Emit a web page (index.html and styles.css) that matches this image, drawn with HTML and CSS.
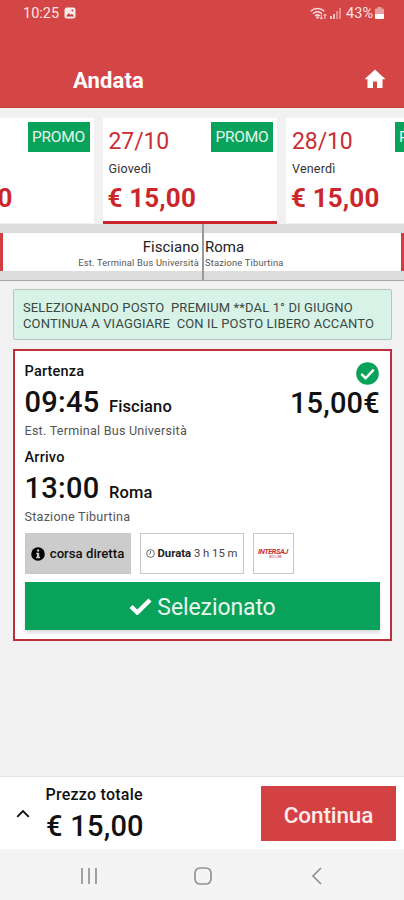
FILE: index.html
```html
<!DOCTYPE html>
<html lang="it">
<head>
<meta charset="utf-8">
<meta name="viewport" content="width=device-width, initial-scale=1">
<title>Andata</title>
<link rel="stylesheet" href="styles.css">
</head>
<body>
<div class="app">
  <header class="header">
    <div class="status">
      <span class="clock">10:25</span>
      <svg class="photo" viewBox="0 0 12 12"><rect x="0.5" y="0.5" width="11" height="11" rx="2.2" fill="#fbeaea"/><path d="M2 9.5 4.8 6l1.8 2L8 6.8l2.2 2.7z" fill="#c23c40"/><circle cx="8.4" cy="3.6" r="1" fill="#c23c40"/></svg>
      <span class="spacer"></span>
      <svg class="wifi" viewBox="0 0 17 13"><g fill="none" stroke="#f8dcdc" stroke-width="1.6"><path d="M.8 4.2C4.300.6 10.700.6 14.200 4.200"/><path d="M3 6.700c2.600-2.600 6.400-2.600 9 0"/><path d="M5.200 9c1.400-1.300 3.200-1.300 4.600 0"/></g><circle cx="7.500" cy="10.500" r="1.200" fill="#f8dcdc"/><path d="M11.300 7.500v4.500M9.800 10.500l1.500 1.700 1.500-1.700M15 12V7M13.600 8.600 15 7l1.400 1.600" fill="none" stroke="#f8dcdc"/></svg>
      <svg class="signal" viewBox="0 0 11 12"><g fill="#f3c4c4"><path d="M0 9h2v3H0zM3 7h2v5H3z"/><path d="M6 4h2v8H6zM9 1h2v11H9z" opacity=".55"/></g></svg>
      <span class="percent">43%</span>
      <svg class="battery" viewBox="0 0 9 12"><path d="M2.500 0h4v1.500H8Q9 1.500 9 2.500V6H0V2.500Q0 1.500 1 1.500h1.500z" fill="#e9a0a0"/><path d="M0 6.500h9V11q0 1-1 1H1q-1 0-1-1z" fill="#fff"/></svg>
    </div>
    <div class="titlebar">
      <h1>Andata</h1>
      <svg class="home" viewBox="0 0 22 20"><path d="M11 .5 21.500 10.200H18.500V19H13V12.500H9V19H3.500V10.200H.5z" fill="#fff"/></svg>
    </div>
  </header>

  <nav class="dates">
    <div class="day">
      <div class="top"><span class="date"></span><span class="promo">PROMO</span></div>
      <div class="weekday"></div>
      <div class="fare">€ 15,00</div>
    </div>
    <div class="day active">
      <div class="top"><span class="date">27/10</span><span class="promo">PROMO</span></div>
      <div class="weekday">Giovedì</div>
      <div class="fare">€ 15,00</div>
    </div>
    <div class="day">
      <div class="top"><span class="date">28/10</span><span class="promo">PROMO</span></div>
      <div class="weekday">Venerdì</div>
      <div class="fare">€ 15,00</div>
    </div>
  </nav>

  <section class="route">
    <div class="from"><div class="stop"><b>Fisciano</b><small>Est. Terminal Bus Università</small></div></div>
    <div class="to"><div class="stop"><b>Roma</b><small>Stazione Tiburtina</small></div></div>
  </section>

  <main class="content">
    <div class="notice"><div class="l1">SELEZIONANDO POSTO&nbsp; PREMIUM **DAL 1° DI GIUGNO</div><div class="l2">CONTINUA A VIAGGIARE&nbsp; CON IL POSTO LIBERO ACCANTO</div></div>

    <article class="trip">
      <div class="summary">
        <div class="legs">
          <div class="label">Partenza</div>
          <div class="when"><span class="time">09:45</span><span class="city">Fisciano</span></div>
          <div class="station">Est. Terminal Bus Università</div>
          <div class="label arr">Arrivo</div>
          <div class="when"><span class="time">13:00</span><span class="city">Roma</span></div>
          <div class="station">Stazione Tiburtina</div>
        </div>
        <div class="cost">
          <svg class="tick" viewBox="0 0 24 24"><circle cx="12" cy="12" r="11.800" fill="#08a25a"/><path d="M5.500 12.500 10 17l8.500-9" fill="none" stroke="#fff" stroke-width="2.600"/></svg>
          <div class="amount">15,00€</div>
        </div>
      </div>
      <div class="tags">
        <div class="tag direct"><svg viewBox="0 0 14 14"><circle cx="7" cy="7" r="6.800"/><path d="M6 2.600h2.200v2H6zM5.200 5.800h3v4h.9v1.400H5.100V9.800H6V7.200h-.8z" fill="#ccc"/></svg><span>corsa diretta</span></div>
        <div class="tag duration"><svg viewBox="0 0 10 10"><circle cx="5" cy="5" r="4.300" fill="none" stroke="#444" stroke-width=".9"/><path d="M5 2.200V5L3.500 6.200" fill="none" stroke="#444" stroke-width=".9"/></svg><span><b>Durata</b> 3 h 15 m</span></div>
        <div class="tag brand"><span class="name">INTERSAJ</span><span class="sub">BUS LINE</span></div>
      </div>
      <button class="select"><svg viewBox="0 0 23 17"><path d="M2 8.500 8.300 14.500 21 2" fill="none" stroke="#fff" stroke-width="4.400"/></svg><span>Selezionato</span></button>
    </article>
  </main>

  <footer class="total">
    <svg class="chevron" viewBox="0 0 14 9"><path d="M1.200 7.800 7 2l5.800 5.800" fill="none" stroke="#111" stroke-width="1.900"/></svg>
    <div class="sum"><div class="caption">Prezzo totale</div><div class="value">€ 15,00</div></div>
    <button class="continue">Continua</button>
  </footer>

  <div class="sysnav">
    <svg viewBox="0 0 18 18"><path d="M2 1v16M9 1v16M16 1v16"/></svg>
    <svg viewBox="0 0 18 18"><rect x="1" y="1" width="16" height="16" rx="5"/></svg>
    <svg viewBox="0 0 18 18"><path d="M13 1 5 9l8 8"/></svg>
  </div>
</div>
</body>
</html>
```
FILE: styles.css
```css
* { box-sizing: border-box; }
body { margin: 0; font-family: Roboto, "Liberation Sans", sans-serif; color: #111; }
svg { display: block; flex: none; }
button { border: 0; padding: 0; margin: 0; font-family: inherit; }
.app { width: 404px; height: 900px; overflow: hidden; display: flex; flex-direction: column; background: #f1f1f1; }

.header { flex: none; height: 108px; background: #d44545; border-bottom: 1px solid #c93a3a; color: #fff; }
.status { height: 26px; padding: 0 20px 0 23px; display: flex; align-items: center; font-size: 14.5px; color: #fbe6e6; }
.photo { width: 12px; height: 12px; margin-left: 5px; }
.spacer { flex: 1; }
.wifi { width: 17px; height: 13px; }
.signal { width: 11px; height: 12px; margin: 0 5px 0 3px; }
.battery { width: 9px; height: 12px; margin-left: 2px; }
.titlebar { height: 60px; margin-top: 25px; padding: 0 18px 0 73px; display: flex; justify-content: space-between; align-items: center; }
h1 { margin: 0; font-size: 22px; line-height: 28px; font-weight: 700; letter-spacing: .15px; }
.home { width: 22px; height: 20px; margin-bottom: 4px; }

.dates { flex: none; height: 116px; display: flex; gap: 9px; padding-top: 10px; margin-left: -81px; width: 560px; background: #f1f1f1; }
.day { width: 174.500px; height: 105px; background: #fff; padding: 4px 4px 0 6px; }
.day.active { height: 106px; border-bottom: 3px solid #cb242c; }
.top { display: flex; justify-content: space-between; height: 37px; }
.date { font-size: 23px; line-height: 39px; color: #c92d35; letter-spacing: -.1px; }
.promo { width: 62px; height: 30px; background: #08a25a; color: #e6f7ee; font-size: 15.500px; line-height: 31px; text-align: center; letter-spacing: -.2px; }
.weekday { font-size: 12.500px; height: 20px; line-height: 20px; color: #333; letter-spacing: .2px; }
.fare { font-size: 26px; line-height: 36px; margin-top: 1px; margin-left: -1px; font-weight: 700; color: #cc262d; letter-spacing: .15px; }

.route { flex: none; height: 57px; display: flex; background: #dcdcdc; border-bottom: 1px solid #a5a5a5; }
.from, .to { padding: 9px 0; }
.from { width: 203px; border-right: 1px solid #999; }
.to { flex: 1; border-left: 1px solid #999; }
.stop { height: 38px; background: #fff; display: flex; flex-direction: column; padding: 4px 1px 0; }
.from .stop { border-left: 3px solid #d43d40; align-items: flex-end; padding-right: 3px; }
.to .stop { border-right: 3px solid #d43d40; }
.stop b { font-size: 15px; line-height: 20px; font-weight: 400; color: #222; }
.stop small { font-size: 9.300px; line-height: 12px; color: #555; letter-spacing: .2px; }

.content { flex: 1; padding: 8px 12px 0 13px; }
.notice { height: 51px; background: #d7f3e8; border: 1px solid #b4c8c0; border-radius: 2px; padding: 10px 9px 0; font-size: 13px; line-height: 15.500px; color: #3b4742; white-space: nowrap; letter-spacing: .13px; }
.trip { margin-top: 9px; height: 292px; border: 2px solid #be2e3b; background: #fff; padding: 12px 10px 0; }
.summary { display: flex; justify-content: space-between; height: 170px; }
.legs { margin-left: -.5px; }
.label { font-size: 14.500px; line-height: 18px; font-weight: 500; letter-spacing: .2px; }
.label.arr { margin-top: 10px; }
.when { height: 42px; display: flex; align-items: baseline; line-height: 42px; }
.time { font-size: 29px; font-weight: 500; width: 84.500px; letter-spacing: .3px; }
.city { font-size: 16.500px; font-weight: 500; letter-spacing: .1px; }
.station { font-size: 12.600px; line-height: 16px; color: #555; letter-spacing: .23px; }
.cost { display: flex; flex-direction: column; align-items: flex-end; }
.tick { width: 23px; height: 23px; margin: -1px 1px 0 0; }
.amount { font-size: 29px; line-height: 37px; font-weight: 500; letter-spacing: .2px; }
.tags { display: flex; gap: 9px; margin-left: -.5px; }
.tag { height: 41px; border: 1px solid #c8c8c8; display: flex; align-items: center; justify-content: center; white-space: nowrap; }
.direct { width: 106px; background: #ccc; font-size: 13.200px; gap: 5px; font-weight: 500; }
.direct svg { width: 14px; height: 14px; }
.duration { width: 104px; font-size: 11.300px; gap: 3px; color: #444; }
.duration b { font-weight: 700; color: #222; }
.duration svg { width: 9px; height: 9px; }
.brand { width: 41px; flex-direction: column; color: #c9323a; padding-bottom: 1px; }
.name { font-size: 7.500px; line-height: 8px; font-weight: 700; font-style: italic; letter-spacing: -.5px; }
.sub { font-size: 3px; line-height: 3px; margin-left: 5px; }
.select { width: 100%; height: 48px; margin-top: 8px; background: #08a25a; color: #e8f8ef; display: flex; align-items: center; justify-content: center; gap: 5px; font-size: 23px; line-height: 27px; box-shadow: 0 3px 3px #ddd; letter-spacing: -.1px; }
.select span { padding-top: 2px; }
.select svg { width: 23px; height: 17px; }

.total { flex: none; height: 73px; background: #fff; border-top: 1px solid #e5e5e5; display: flex; padding-left: 16px; }
.chevron { width: 14px; height: 9px; margin: 32px 16px 0 0; }
.sum { flex: 1; }
.caption { font-size: 16px; line-height: 20px; margin-top: 8px; margin-left: -.5px; font-weight: 500; letter-spacing: .25px; }
.value { font-size: 29px; line-height: 42px; font-weight: 500; letter-spacing: .25px; }
.continue { width: 135px; height: 55px; margin: 9px 8px 0 0; padding-top: 2px; background: #d34143; color: #fbecec; font-size: 22.500px; font-weight: 500; letter-spacing: -.1px; }
.sysnav { flex: none; height: 51px; background: #f4f4f4; display: flex; gap: 96px; padding: 18px 0 0 80px; }
.sysnav svg { width: 18px; height: 18px; fill: none; stroke: #929292; stroke-width: 1.700; }
```
